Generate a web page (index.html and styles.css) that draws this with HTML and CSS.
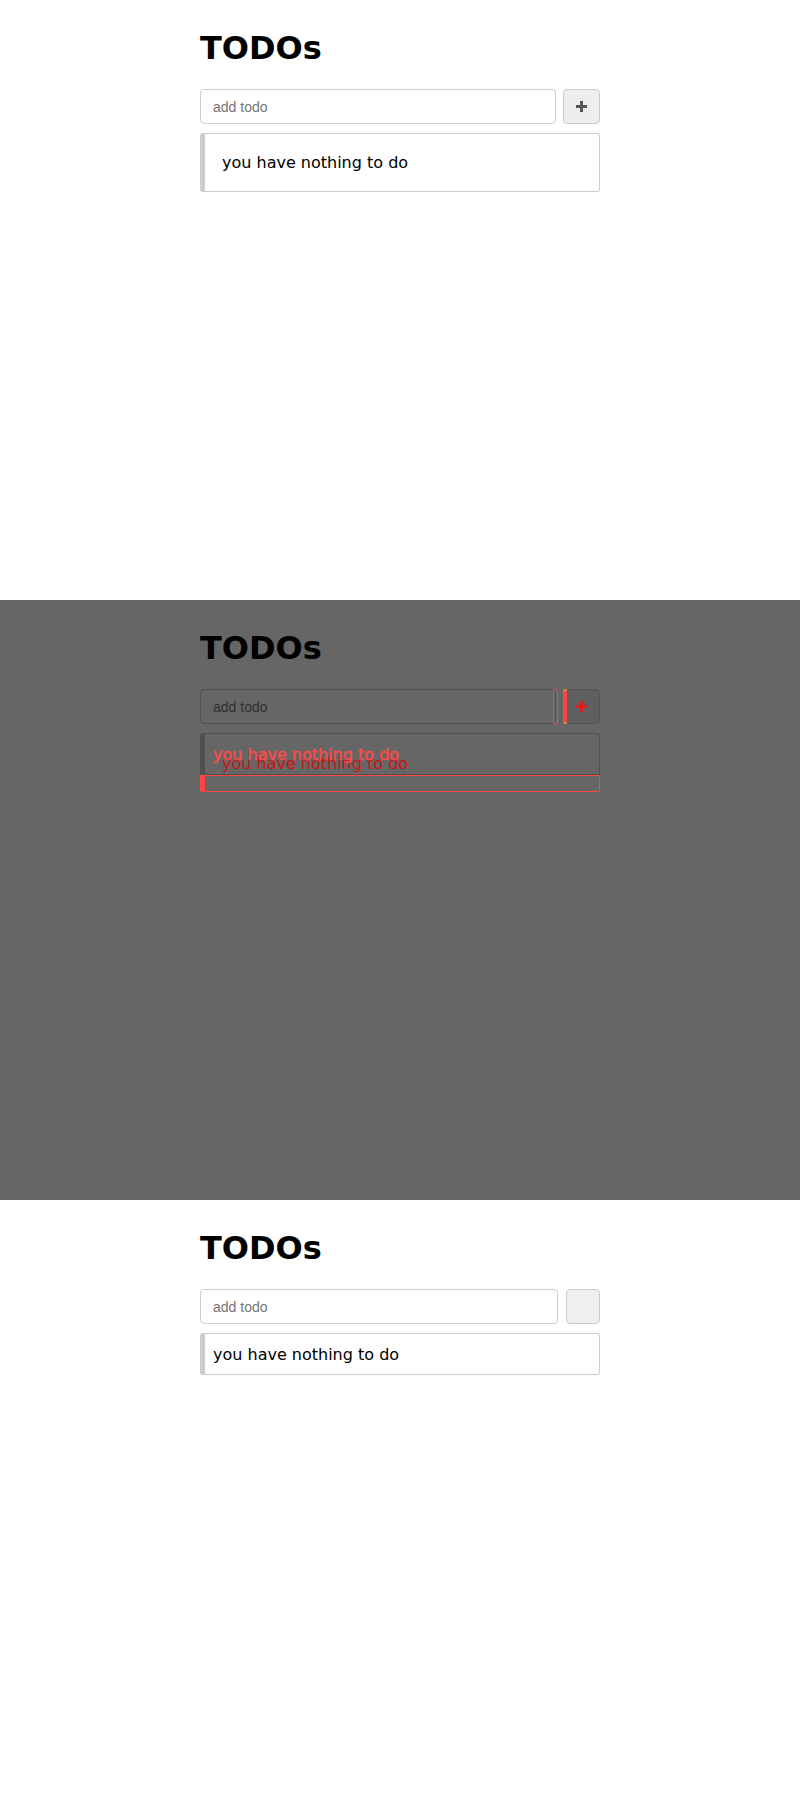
FILE: index.html
```html
<!DOCTYPE html>
<html>
<head>
<meta charset="utf-8">
<title>TODOs diff</title>
<link rel="stylesheet" href="styles.css">
</head>
<body>
  <section class="panel panel--expected">
    <div class="app">
      <h1 class="title">TODOs</h1>
      <div class="add-row">
        <input class="add-input" type="text" placeholder="add todo">
        <button class="add-btn" type="button">
          <svg class="plus" width="11" height="11" viewBox="0 0 11 11"><path d="M4 0h3v4h4v3H7v4H4V7H0V4h4z"/></svg>
        </button>
      </div>
      <div class="list"><div class="empty">you have nothing to do</div></div>
    </div>
  </section>

  <section class="panel panel--diff">
    <div class="app">
      <h1 class="title">TODOs</h1>
      <div class="add-row">
        <input class="add-input" type="text" placeholder="add todo">
        <button class="add-btn" type="button"></button>
      </div>
      <div class="list"></div>

      <div class="diff diff-input-edge"></div>
      <div class="diff diff-btn-edge"></div>
      <svg class="diff diff-plus" width="11" height="11" viewBox="0 0 11 11"><path d="M4 0h3v4h4v3H7v4H4V7H0V4h4z"/></svg>
      <div class="diff diff-text diff-text--old">you have nothing to do</div>
      <div class="diff diff-text diff-text--new">you have nothing to do</div>
      <div class="diff diff-box-tail"></div>
    </div>
  </section>

  <section class="panel panel--actual">
    <div class="app">
      <h1 class="title">TODOs</h1>
      <div class="add-row">
        <input class="add-input" type="text" placeholder="add todo">
        <button class="add-btn" type="button"></button>
      </div>
      <div class="list"><div class="empty">you have nothing to do</div></div>
    </div>
  </section>
</body>
</html>
```

FILE: styles.css
```css
html, body {
  margin: 0;
  padding: 0;
}

body {
  width: 800px;
  font-family: "DejaVu Sans", sans-serif;
  color: #000;
  background: #fff;
}

.panel {
  height: 600px;
  box-sizing: border-box;
  padding-top: 30px;
  overflow: hidden;
  background: #fff;
}

.app {
  position: relative;
  width: 400px;
  margin: 0 auto;
}

.title {
  margin: 0 0 22px;
  font-family: "DejaVu Sans", sans-serif;
  font-size: 32px;
  font-weight: bold;
  line-height: 37px;
  color: #000;
}

.add-row {
  display: flex;
  gap: 7px;
  height: 35px;
}

.add-input {
  flex: 1;
  min-width: 0;
  height: 35px;
  box-sizing: border-box;
  margin: 0;
  padding: 0 12px;
  border: 1px solid #ccc;
  border-radius: 4px;
  background: #fff;
  font-family: "Liberation Sans", Arial, sans-serif;
  font-size: 14px;
  color: #333;
  outline: none;
}

.add-input::placeholder {
  color: #757575;
}

.add-btn {
  width: 37px;
  height: 35px;
  box-sizing: border-box;
  margin: 0;
  padding: 0;
  display: flex;
  align-items: center;
  justify-content: center;
  border: 1px solid #ccc;
  border-radius: 4px;
  background: #eee;
}

.plus {
  display: block;
  fill: #555;
}

.list {
  margin-top: 9px;
  box-sizing: border-box;
  border: 1px solid #ccc;
  border-left: 5px solid #ccc;
  border-radius: 3px;
  background: #fff;
}

.empty {
  padding: 17px 16px 16px 17px;
  font-size: 16px;
  line-height: 24px;
  color: #000;
}

/* ---------- actual (third) panel ---------- */
.panel--actual .add-row {
  gap: 8px;
}

.panel--actual .add-btn {
  width: 34px;
  background: #efefef;
}

.panel--actual .empty {
  padding: 9px 8px 7px 8px;
}

/* ---------- diff (middle) panel ---------- */
.panel--diff {
  background: #666;
}

.panel--diff .add-input {
  background: #666;
  border-color: #525252;
}

.panel--diff .add-input::placeholder {
  color: #2f2f2f;
}

.panel--diff .add-btn {
  background: #5f5f5f;
  border-color: #525252;
}

.panel--diff .list {
  height: 42px;
  background: #666;
  border-color: #525252;
  border-left-color: #505050;
  border-radius: 3px 3px 0 0;
}

.diff {
  position: absolute;
  box-sizing: border-box;
}

.diff-input-edge {
  left: 353px;
  top: 59px;
  width: 5px;
  height: 35px;
  border: 1px solid #f44;
  border-radius: 2px;
}

.diff-btn-edge {
  left: 363px;
  top: 59px;
  width: 4px;
  height: 35px;
  background: #f44;
  border-top: 2px solid #d0884a;
  border-bottom: 2px solid #d0884a;
  border-radius: 2px 0 0 2px;
}

.diff-plus {
  left: 376px;
  top: 71px;
  fill: #d42020;
}

.diff-text {
  font-family: "DejaVu Sans", sans-serif;
  font-size: 16px;
  line-height: 24px;
  white-space: nowrap;
}

.diff-text--old {
  left: 22px;
  top: 122px;
  color: #cc1414;
}

.diff-text--new {
  left: 13px;
  top: 113px;
  color: #ff4848;
  -webkit-text-stroke: 0.4px #ff4848;
}

.diff-box-tail {
  left: 0;
  top: 145px;
  width: 400px;
  height: 17px;
  border: 1px solid #f44;
  border-left: 5px solid #f44;
  border-radius: 0 0 2px 2px;
}
```
